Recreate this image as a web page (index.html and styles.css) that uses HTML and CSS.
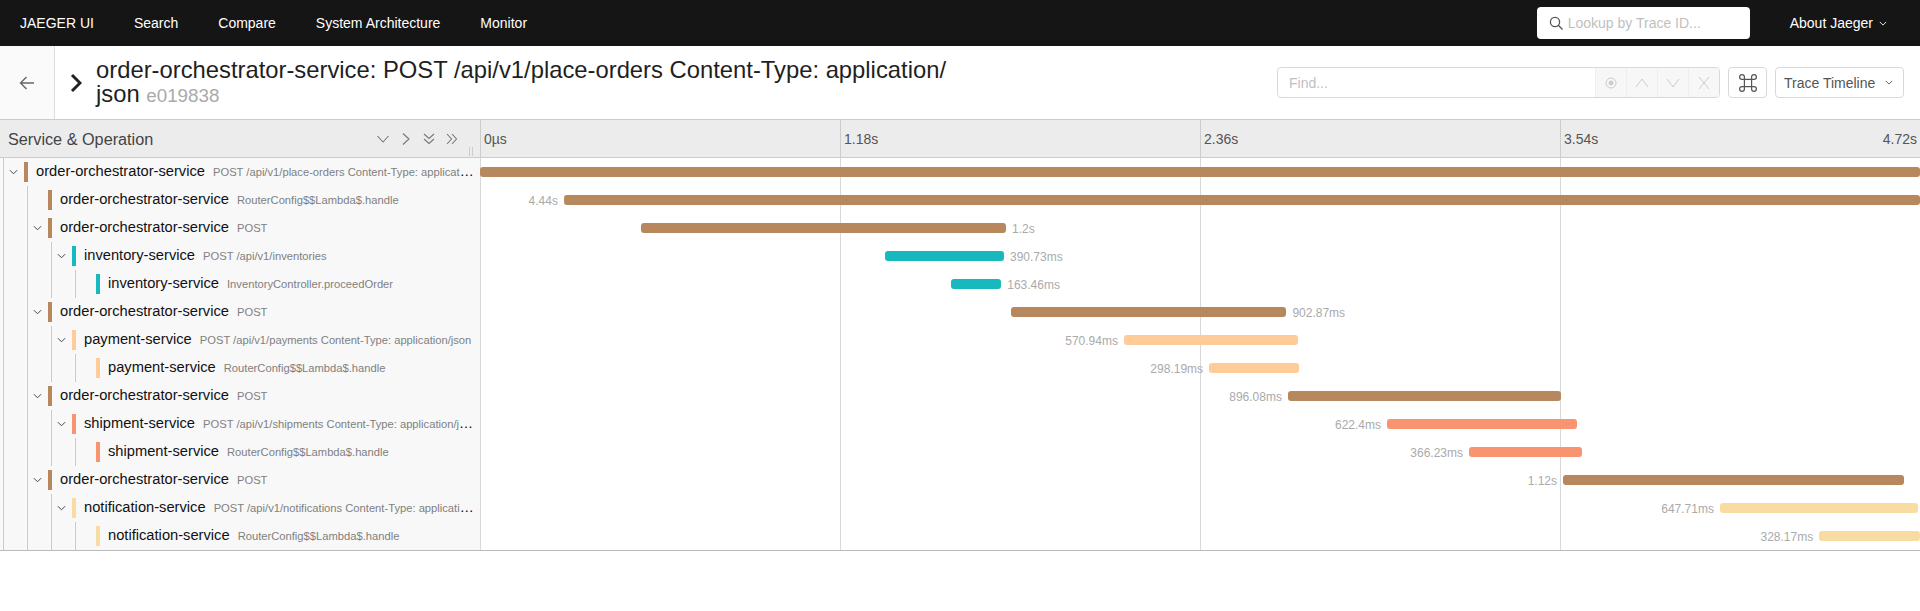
FILE: index.html
```html
<!DOCTYPE html>
<html lang="en">
<head>
<meta charset="utf-8">
<title>Jaeger UI</title>
<link rel="stylesheet" href="styles.css">
</head>
<body>
<nav class="nav">
  <a class="nav-item brand">JAEGER UI</a>
  <a class="nav-item">Search</a>
  <a class="nav-item">Compare</a>
  <a class="nav-item">System Architecture</a>
  <a class="nav-item">Monitor</a>
  <div class="lookup">
    <svg class="lookup-icon" viewBox="0 0 14 14"><circle cx="6" cy="6" r="4.600"/><path d="M9.300 9.300 13.500 13.500"/></svg>
    <span>Lookup by Trace ID...</span>
  </div>
  <a class="about">About Jaeger <svg class="caret" viewBox="0 0 10 6"><path d="M1 1l4 4 4-4"/></svg></a>
</nav>
<header class="trace-head">
  <div class="back"><svg viewBox="0 0 16 16"><path d="M15 8H1.500M7.500 2 1.500 8l6 6"/></svg></div>
  <svg class="head-chevron" viewBox="0 0 12 20"><path d="M2 2l8 8-8 8"/></svg>
  <h1 class="title">order-orchestrator-service: POST /api/v1/place-orders Content-Type: application/<wbr>json <small>e019838</small></h1>
  <div class="finder">
    <span class="find-text">Find...</span>
    <span class="find-btn"><svg viewBox="0 0 14 14"><circle cx="7" cy="7" r="5" class="thin"/><circle cx="7" cy="7" r="2" class="solid"/></svg></span>
    <span class="find-btn"><svg viewBox="0 0 14 14"><path d="M1 11 7 3l6 8"/></svg></span>
    <span class="find-btn"><svg viewBox="0 0 14 14"><path d="M1 3l6 8 6-8"/></svg></span>
    <span class="find-btn"><svg viewBox="0 0 14 14"><path d="M2 1l10 12M12 1 2 13"/></svg></span>
  </div>
  <button class="cmd"><svg viewBox="1.500 1.500 15 15"><path d="M6 6h6v6H6zM6 6H4a2 2 0 1 1 2-2zM12 6V4a2 2 0 1 1 2 2zM12 12h2a2 2 0 1 1-2 2zM6 12v2a2 2 0 1 1-2-2z"/></svg></button>
  <button class="view">Trace Timeline <svg class="caret" viewBox="0 0 10 6"><path d="M1 1l4 4 4-4"/></svg></button>
</header>
<main class="trace">
  <div class="row row-head">
    <div class="left-head">
      <span class="left-title">Service &amp; Operation</span>
      <span class="tools">
        <svg viewBox="0 0 14 14"><path d="M1.500 4 7 10l5.500-6"/></svg>
        <svg viewBox="0 0 14 14"><path d="M4 1.500 10 7l-6 5.500"/></svg>
        <svg viewBox="0 0 14 14"><path d="M2 2l5 4.500L12 2M2 7l5 4.500L12 7"/></svg>
        <svg viewBox="0 0 14 14"><path d="M2 2l4.500 5L2 12M7 2l4.500 5L7 12"/></svg>
      </span>
      <span class="grip"></span>
    </div>
    <div class="ticks">
      <span>0µs</span><span>1.18s</span><span>2.36s</span><span>3.54s</span><span class="tick-end">4.72s</span>
    </div>
  </div>

  <div class="row">
    <div class="span-cell"><span class="toggle"><svg viewBox="0 0 10 6"><path d="M1 1l4 4 4-4"/></svg></span><i class="swatch c-order"></i><span class="label"><b>order-orchestrator-service</b><em>POST /api/v1/place-orders Content-Type: application/json</em></span></div>
    <div class="track"><div class="bar c-order" style="left:0%;width:100%"></div></div>
  </div>
  <div class="row">
    <div class="span-cell"><i class="guide"></i><span class="toggle"></span><i class="swatch c-order"></i><span class="label"><b>order-orchestrator-service</b><em>RouterConfig$$Lambda$.handle</em></span></div>
    <div class="track"><div class="bar c-order" style="left:5.83%;width:94.17%"><span class="dur before">4.44s</span></div></div>
  </div>
  <div class="row">
    <div class="span-cell"><i class="guide"></i><span class="toggle"><svg viewBox="0 0 10 6"><path d="M1 1l4 4 4-4"/></svg></span><i class="swatch c-order"></i><span class="label"><b>order-orchestrator-service</b><em>POST</em></span></div>
    <div class="track"><div class="bar c-order" style="left:11.18%;width:25.35%"><span class="dur after">1.2s</span></div></div>
  </div>
  <div class="row">
    <div class="span-cell"><i class="guide"></i><i class="guide"></i><span class="toggle"><svg viewBox="0 0 10 6"><path d="M1 1l4 4 4-4"/></svg></span><i class="swatch c-inv"></i><span class="label"><b>inventory-service</b><em>POST /api/v1/inventories</em></span></div>
    <div class="track"><div class="bar c-inv" style="left:28.13%;width:8.26%"><span class="dur after">390.73ms</span></div></div>
  </div>
  <div class="row">
    <div class="span-cell"><i class="guide"></i><i class="guide"></i><i class="guide"></i><span class="toggle"></span><i class="swatch c-inv"></i><span class="label"><b>inventory-service</b><em>InventoryController.proceedOrder</em></span></div>
    <div class="track"><div class="bar c-inv" style="left:32.71%;width:3.49%"><span class="dur after">163.46ms</span></div></div>
  </div>
  <div class="row">
    <div class="span-cell"><i class="guide"></i><span class="toggle"><svg viewBox="0 0 10 6"><path d="M1 1l4 4 4-4"/></svg></span><i class="swatch c-order"></i><span class="label"><b>order-orchestrator-service</b><em>POST</em></span></div>
    <div class="track"><div class="bar c-order" style="left:36.88%;width:19.12%"><span class="dur after">902.87ms</span></div></div>
  </div>
  <div class="row">
    <div class="span-cell"><i class="guide"></i><i class="guide"></i><span class="toggle"><svg viewBox="0 0 10 6"><path d="M1 1l4 4 4-4"/></svg></span><i class="swatch c-pay"></i><span class="label"><b>payment-service</b><em>POST /api/v1/payments Content-Type: application/json</em></span></div>
    <div class="track"><div class="bar c-pay" style="left:44.72%;width:12.08%"><span class="dur before">570.94ms</span></div></div>
  </div>
  <div class="row">
    <div class="span-cell"><i class="guide"></i><i class="guide"></i><i class="guide"></i><span class="toggle"></span><i class="swatch c-pay"></i><span class="label"><b>payment-service</b><em>RouterConfig$$Lambda$.handle</em></span></div>
    <div class="track"><div class="bar c-pay" style="left:50.63%;width:6.25%"><span class="dur before">298.19ms</span></div></div>
  </div>
  <div class="row">
    <div class="span-cell"><i class="guide"></i><span class="toggle"><svg viewBox="0 0 10 6"><path d="M1 1l4 4 4-4"/></svg></span><i class="swatch c-order"></i><span class="label"><b>order-orchestrator-service</b><em>POST</em></span></div>
    <div class="track"><div class="bar c-order" style="left:56.11%;width:18.98%"><span class="dur before">896.08ms</span></div></div>
  </div>
  <div class="row">
    <div class="span-cell"><i class="guide"></i><i class="guide"></i><span class="toggle"><svg viewBox="0 0 10 6"><path d="M1 1l4 4 4-4"/></svg></span><i class="swatch c-ship"></i><span class="label"><b>shipment-service</b><em>POST /api/v1/shipments Content-Type: application/json</em></span></div>
    <div class="track"><div class="bar c-ship" style="left:62.99%;width:13.19%"><span class="dur before">622.4ms</span></div></div>
  </div>
  <div class="row">
    <div class="span-cell"><i class="guide"></i><i class="guide"></i><i class="guide"></i><span class="toggle"></span><i class="swatch c-ship"></i><span class="label"><b>shipment-service</b><em>RouterConfig$$Lambda$.handle</em></span></div>
    <div class="track"><div class="bar c-ship" style="left:68.68%;width:7.85%"><span class="dur before">366.23ms</span></div></div>
  </div>
  <div class="row">
    <div class="span-cell"><i class="guide"></i><span class="toggle"><svg viewBox="0 0 10 6"><path d="M1 1l4 4 4-4"/></svg></span><i class="swatch c-order"></i><span class="label"><b>order-orchestrator-service</b><em>POST</em></span></div>
    <div class="track"><div class="bar c-order" style="left:75.21%;width:23.68%"><span class="dur before">1.12s</span></div></div>
  </div>
  <div class="row">
    <div class="span-cell"><i class="guide"></i><i class="guide"></i><span class="toggle"><svg viewBox="0 0 10 6"><path d="M1 1l4 4 4-4"/></svg></span><i class="swatch c-note"></i><span class="label"><b>notification-service</b><em>POST /api/v1/notifications Content-Type: application/json</em></span></div>
    <div class="track"><div class="bar c-note" style="left:86.11%;width:13.72%"><span class="dur before">647.71ms</span></div></div>
  </div>
  <div class="row">
    <div class="span-cell"><i class="guide"></i><i class="guide"></i><i class="guide"></i><span class="toggle"></span><i class="swatch c-note"></i><span class="label"><b>notification-service</b><em>RouterConfig$$Lambda$.handle</em></span></div>
    <div class="track"><div class="bar c-note" style="left:93%;width:7%"><span class="dur before">328.17ms</span></div></div>
  </div>
</main>
</body>
</html>
```
FILE: styles.css
```css
* { box-sizing: border-box; }
html, body { margin: 0; padding: 0; background: #fff; }
body { font-family: "Liberation Sans", Arial, sans-serif; font-size: 14px; color: rgba(0,0,0,.85); overflow: hidden; }
svg { fill: none; stroke: currentColor; display: block; }

.nav { height: 46px; background: #151515; display: flex; align-items: center; color: #fff; padding-left: 20px; padding-right: 33px; }
.nav-item { margin-right: 40px; white-space: nowrap; }
.lookup { margin-left: auto; width: 213px; height: 32px; background: #fff; border-radius: 4px; display: flex; align-items: center; padding-left: 12px; color: #bfbfbf; }
.lookup-icon { width: 14px; height: 14px; color: #555; stroke-width: 1.3; margin-right: 5px; }
.about { margin-left: 40px; display: flex; align-items: center; gap: 6px; white-space: nowrap; }
.caret { width: 8px; height: 5px; stroke-width: 1.1; }

.trace-head { height: 73px; display: flex; align-items: center; padding-right: 16px; }
.back { width: 55px; height: 73px; background: #fafafa; border-right: 1px solid #ddd; display: flex; align-items: center; justify-content: center; color: #666; }
.back svg { width: 16px; height: 16px; stroke-width: 1.4; }
.head-chevron { width: 12px; height: 20px; margin-left: 15px; stroke-width: 3; color: #222; flex: none; }
.title { margin: 0 0 0 14px; width: 870px; font-size: 23.8px; font-weight: 400; line-height: 24px; color: #1f1f1f; }
.title small { font-size: 18.8px; color: #aaa; }
.finder { margin-left: auto; width: 443px; height: 31px; border: 1px solid #d9d9d9; border-radius: 4px; display: flex; align-items: stretch; overflow: hidden; color: #bfbfbf; }
.find-text { flex: 1; padding-left: 11px; display: flex; align-items: center; }
.find-btn { width: 31px; background: #f7f7f7; border-left: 1px solid #eee; display: flex; align-items: center; justify-content: center; color: #ccc; }
.find-btn svg { width: 14px; height: 14px; stroke-width: 1; }
.find-btn .solid { fill: currentColor; }
.cmd { margin-left: 8px; width: 39px; height: 31px; background: #fff; border: 1px solid #d9d9d9; border-radius: 4px; padding: 0; display: flex; align-items: center; justify-content: center; color: #555; }
.cmd svg { width: 18px; height: 18px; stroke-width: 1; }
.view { margin-left: 8px; width: 129px; height: 31px; background: #fff; border: 1px solid #d9d9d9; border-radius: 4px; padding: 0 0 0 8px; font: inherit; color: #555; display: flex; align-items: center; gap: 10px; white-space: nowrap; }

.trace { border-bottom: 1px solid #bbb; }
.row { display: grid; grid-template-columns: 480px 1fr; height: 28px; }
.row-head { height: 39px; background: #ececec; border-top: 1px solid #ccc; border-bottom: 1px solid #ccc; color: #444; }
.left-head { display: flex; align-items: center; padding: 1px 0 0 8px; position: relative; }
.left-title { font-size: 16.24px; flex: 1; }
.tools { display: flex; gap: 9px; padding-right: 21px; color: #777; }
.tools svg { width: 14px; height: 14px; stroke-width: 1.1; }
.grip { position: absolute; right: 7px; bottom: 1px; width: 4px; height: 9px; border-left: 1px solid #ccc; border-right: 1px solid #ccc; }
.ticks { display: grid; grid-template-columns: repeat(4, 1fr); position: relative; align-items: stretch; }
.ticks span { padding-left: 3px; border-left: 1px solid #ccc; color: #555; display: flex; align-items: center; }
.ticks .tick-end { position: absolute; right: 3px; top: 0; bottom: 0; border: 0; padding: 0; }

.span-cell { display: flex; align-items: stretch; height: 28px; padding-left: 3px; background: #f8f8f8; min-width: 0; }
.guide { width: 24px; flex: none; border-left: 1px solid #ccc; }
.toggle { width: 21px; flex: none; border-left: 1px solid #ccc; display: flex; align-items: center; justify-content: center; padding-right: 1px; color: #444; }
.toggle svg { width: 9px; height: 6px; stroke-width: 1.1; }
.swatch { width: 4px; flex: none; margin: 4px 0; }
.label { flex: 1; min-width: 0; padding: 0 4px 0 8px; line-height: 27px; white-space: nowrap; overflow: hidden; text-overflow: ellipsis; color: #000; }
.label b { font-weight: 400; font-size: 14.7px; color: #111; }
.label em { font-style: normal; font-size: 11.2px; color: #808080; margin-left: 8px; }

.c-order { background: #b7885e; }
.c-inv { background: #17b8be; }
.c-pay { background: #ffcb99; }
.c-ship { background: #f89570; }
.c-note { background: #f8dca1; }

.track { position: relative; background-image: linear-gradient(to right, #d8d8d8 1px, transparent 1px); background-size: 25% 100%; }
.bar { position: absolute; top: 9px; height: 10px; border-radius: 3px; }
.dur { position: absolute; top: -2px; font-size: 12px; line-height: 16px; color: #aaa; white-space: nowrap; }
.dur.before { right: 100%; margin-right: 6px; }
.dur.after { left: 100%; margin-left: 6px; }
```
